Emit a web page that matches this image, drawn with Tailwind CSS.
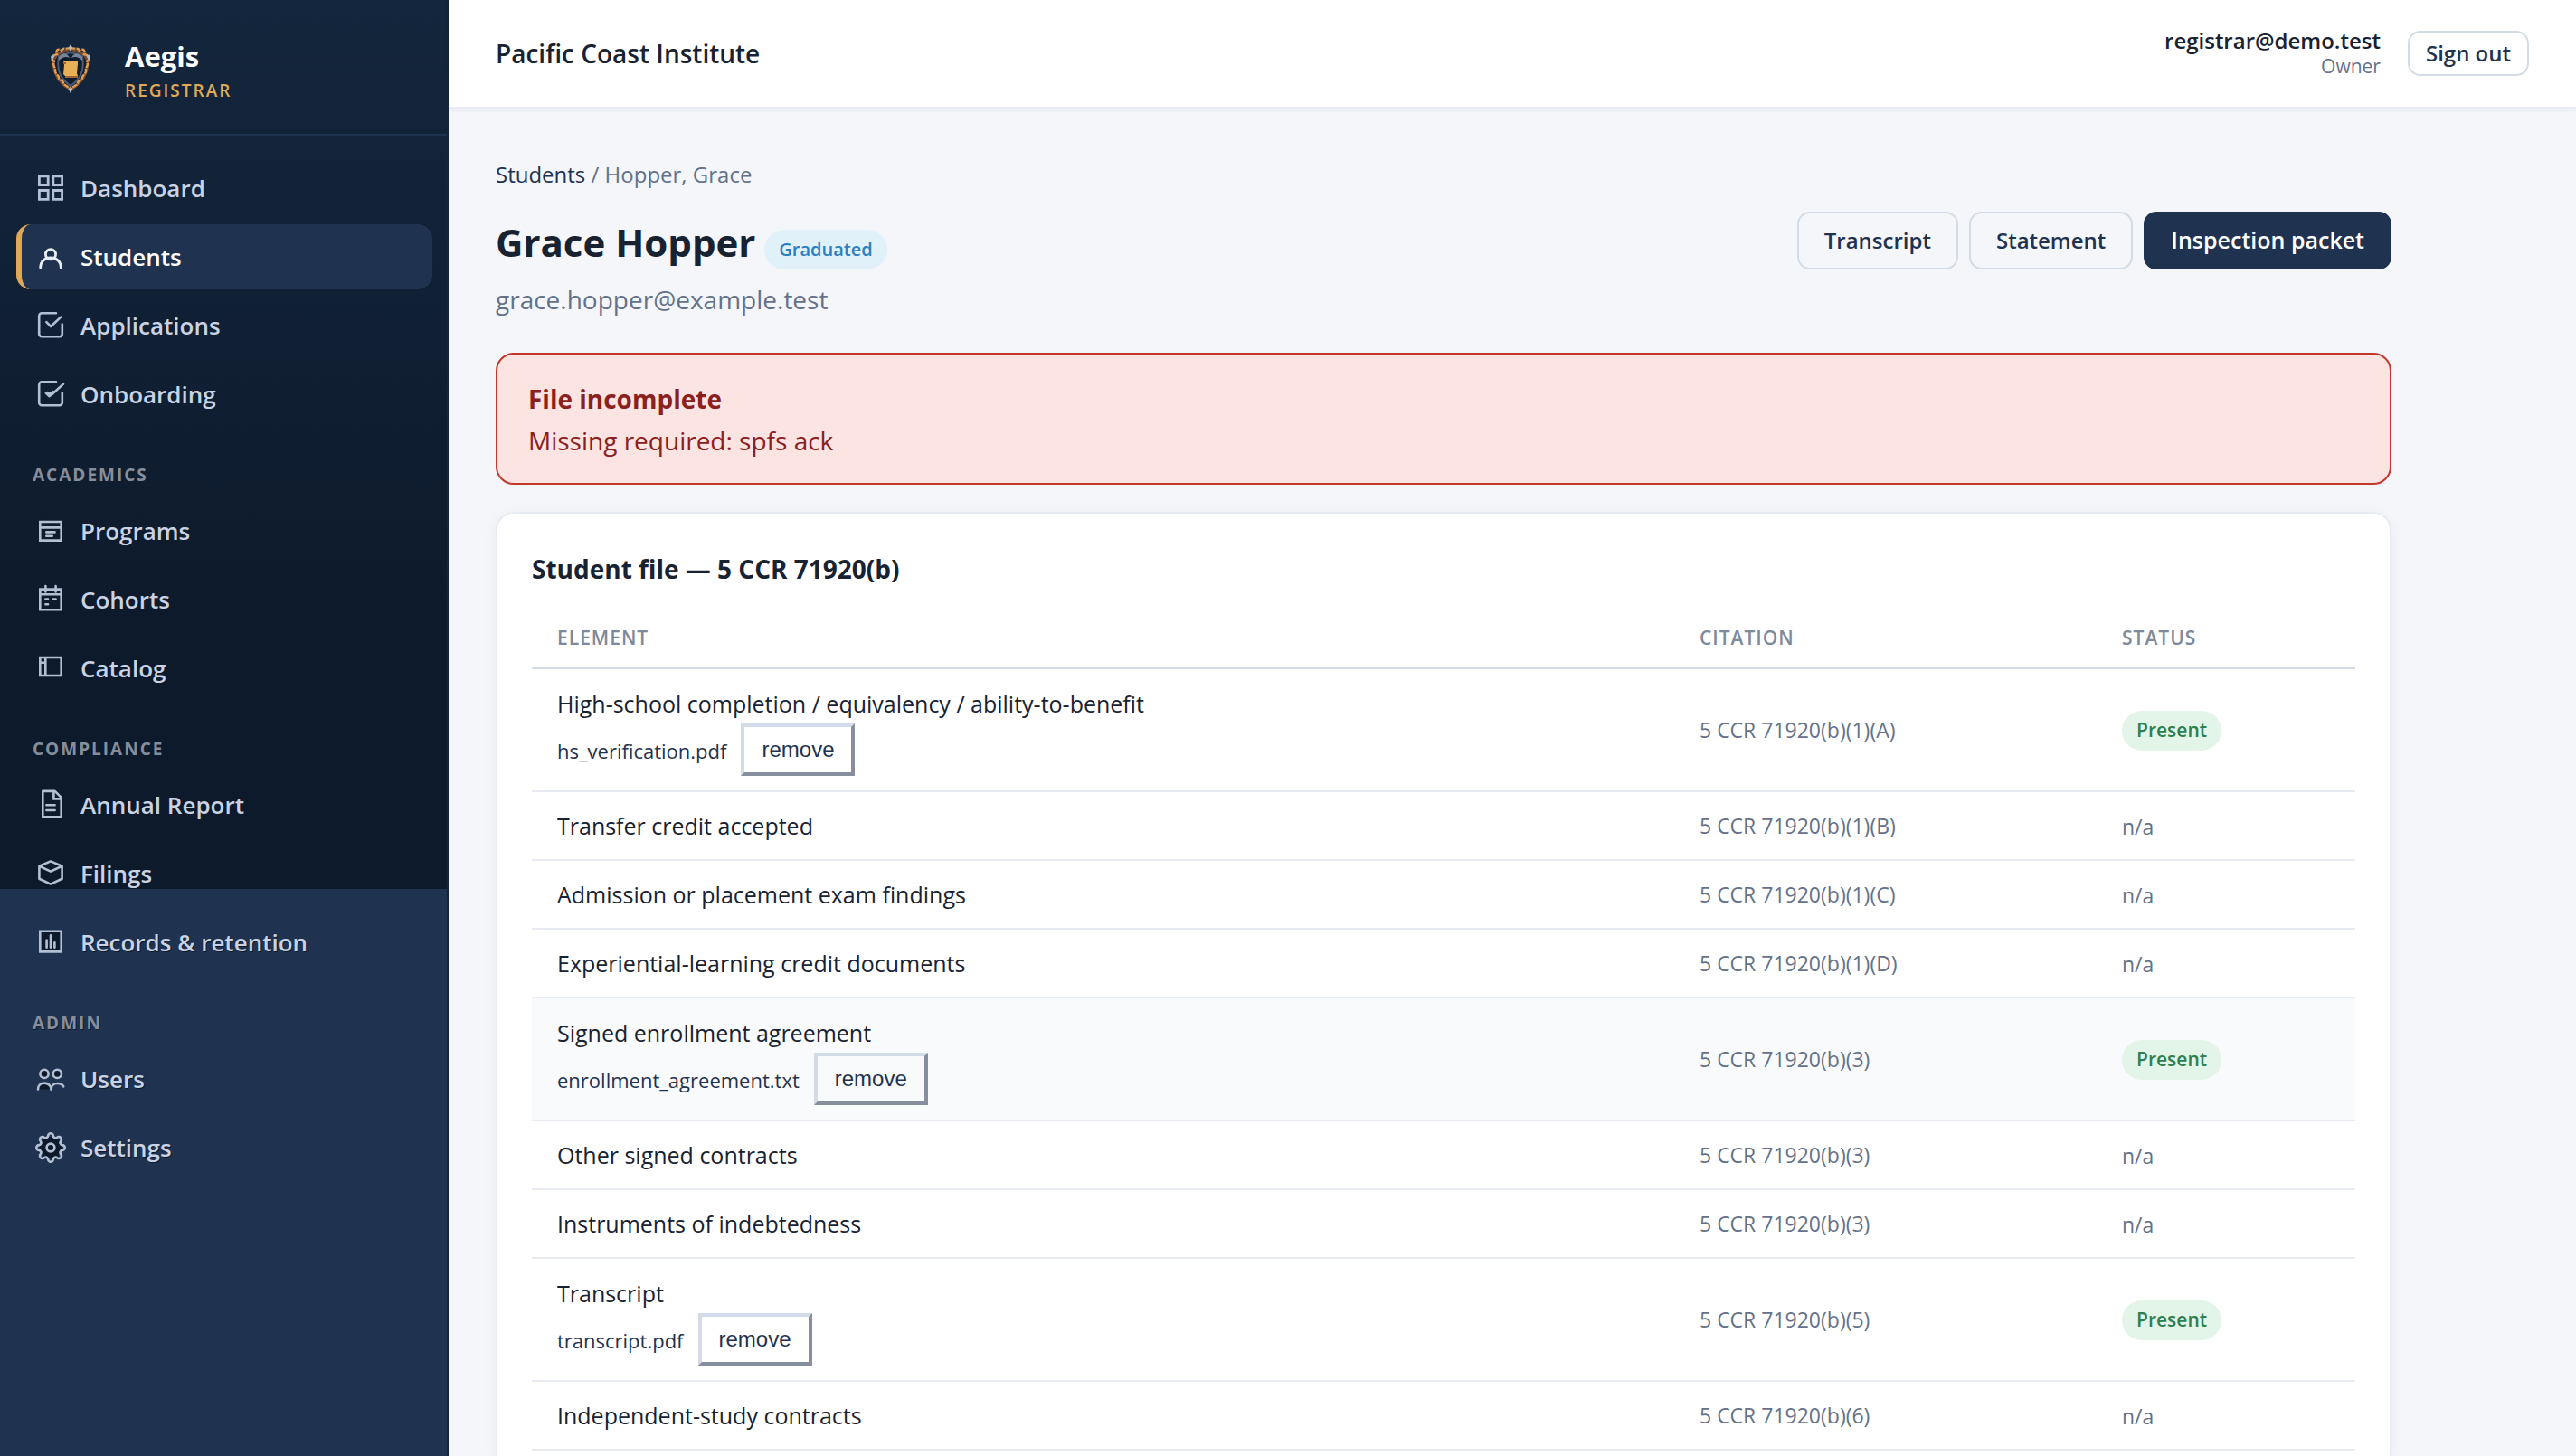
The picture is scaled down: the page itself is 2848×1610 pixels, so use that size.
<!DOCTYPE html>
<html lang="en">
    <head>
        <meta charset="UTF-8">
        <meta name="viewport" content="width=device-width, initial-scale=1.0">
        <title>Grace Hopper - Aegis Registrar</title>
        <script src="https://cdn.jsdelivr.net/npm/@tailwindcss/browser@4"></script>
    </head>
    <body class="bg-[#f4f6fa] font-['Open_Sans','Noto_Sans',sans-serif] text-[#182230]">
        <div class="flex h-screen overflow-hidden">
            <!-- Sidebar -->
            <aside class="w-[496px] shrink-0 border-r-2 border-[#13243b] bg-[#1f3350] bg-[linear-gradient(#14263d,#0d1a2b_70%)] bg-[length:100%_983px] bg-no-repeat">
                <div class="flex h-[150px] items-center gap-9 border-b-2 border-[#1f3350] pt-1 pl-[54px]">
                    <svg class="h-[54px] w-12" viewBox="0 0 48 54" fill="none">
                        <path d="M24 5l15 6 4 7c0 15-6 24-19 32C11 42 5 33 5 18l4-7z" fill="#0f1d30" stroke="#7d4a2e" stroke-width="3" />
                        <path d="M24 9l13 4c3 17-3 26-13 33C14 39 8 30 11 13z" stroke="#4b5a70" stroke-width="2" />
                        <path d="M24 3c-3 4-8-1-10 4-4-3-7 0-5 4-6 1-7 6-3 8-3 5 2 6 1 10-1 4 4 4 4 8 0 3 5 2 5 6 1 3 5 2 8 8 3-6 7-5 8-8 0-4 5-3 5-6 0-4 5-4 4-8-1-4 4-5 1-10 4-2 3-7-3-8 2-4-1-7-5-4-2-5-7 0-10-4z" stroke="#e09d50" stroke-width="2.4" stroke-dasharray="6 1" />
                        <path d="M11 14c4-5 9-5 12 1-4-2-8-1-12 3zM37 14c-4-5-9-5-12 1 4-2 8-1 12 3z" fill="#76849a" />
                        <path d="M16 18h16v4l-1 10 1 3H18l-2-2 1-10z" fill="#e8ae58" />
                        <path d="M18 36h14M16 21h3" stroke="#a5642f" stroke-width="2" />
                        <path d="M24 0l2 4-2 4-2-4zM24 46l2 4-2 4-2-4zM4 11l2 3-2 3-2-3zM44 11l2 3-2 3-2-3z" fill="#a9bdd4" />
                    </svg>
                    <div class="pt-[10px]">
                        <p class="text-[31px] leading-[38px] font-bold text-white">Aegis</p>
                        <p class="text-[19px] leading-[38px] font-semibold tracking-[2px] text-[#e0a955]">REGISTRAR</p>
                    </div>
                </div>
                <nav class="flex flex-col gap-1 pt-[22px] pr-4 pl-[18px] text-[26px] font-semibold text-[#c9d3e3]">
                    <a href="#" class="flex h-[72px] items-center gap-4 rounded-2xl border-l-[6px] border-transparent pl-[15px]">
                        <svg class="h-[34px] w-[34px]" viewBox="0 0 34 34" fill="none" stroke="#b3bfd3" stroke-width="2.8">
                            <path d="M4.4 3.9h9.8v9.8H4.4zM19.8 3.9h9.8v9.8h-9.8zM4.4 19.5h9.8v9.8H4.4zM19.8 19.5h9.8v9.8h-9.8z" />
                        </svg>
                        Dashboard
                    </a>
                    <a href="#" class="flex h-[72px] items-center gap-4 rounded-2xl border-l-[6px] border-[#e0a955] bg-[#1f3350] pl-[15px] text-white">
                        <svg class="h-[34px] w-[34px]" viewBox="0 0 34 34" fill="none" stroke="#e8ecf3" stroke-width="2.8" stroke-linecap="round">
                            <circle cx="17" cy="14.2" r="5.6" />
                            <path d="M5.7 29c0-7 5-11 11.3-11s11.3 4 11.3 11" />
                        </svg>
                        Students
                    </a>
                    <a href="#" class="flex h-[72px] items-center gap-4 rounded-2xl border-l-[6px] border-transparent pl-[15px]">
                        <svg class="h-[34px] w-[34px]" viewBox="0 0 34 34" fill="none" stroke="#b3bfd3" stroke-width="2.6" stroke-linecap="round" stroke-linejoin="round">
                            <path d="M23 3.2H7.2a3 3 0 0 0-3 3v20a3 3 0 0 0 3 3h19.6a3 3 0 0 0 3-3V15.5M12.4 13.2l4.8 4.8L28.2 7.6" />
                        </svg>
                        Applications
                    </a>
                    <a href="#" class="flex h-[72px] items-center gap-4 rounded-2xl border-l-[6px] border-transparent pl-[15px]">
                        <svg class="h-[34px] w-[34px]" viewBox="0 0 34 34" fill="none" stroke="#b3bfd3" stroke-width="2.6" stroke-linecap="round" stroke-linejoin="round">
                            <path d="M23 3.2H7.2a3 3 0 0 0-3 3v20a3 3 0 0 0 3 3h19.6a3 3 0 0 0 3-3V15.5" />
                            <path d="M11.8 15.6l3.8 3.6 4.4-5M13.5 15l4 3L31 5.6M16 15.5v3" />
                        </svg>
                        Onboarding
                    </a>
                    <h3 class="h-[71px] pt-[39px] pl-[18px] text-[19px] leading-5 font-bold tracking-[2px] text-[#868e9b]">ACADEMICS</h3>
                    <a href="#" class="flex h-[72px] items-center gap-4 rounded-2xl border-l-[6px] border-transparent pl-[15px]">
                        <svg class="h-[34px] w-[34px]" viewBox="0 0 34 34" fill="none" stroke="#b3bfd3" stroke-width="2.6">
                            <path d="M5.3 7h23.4v20.6H5.3zM5.3 13.4h23.4" />
                            <path d="M12.3 18.4h9.2M12.3 22.8h6.4" stroke-linecap="round" />
                        </svg>
                        Programs
                    </a>
                    <a href="#" class="flex h-[72px] items-center gap-4 rounded-2xl border-l-[6px] border-transparent pl-[15px]">
                        <svg class="h-[34px] w-[34px]" viewBox="0 0 34 34" fill="none" stroke="#b3bfd3" stroke-width="2.6">
                            <path d="M5.3 5.6h23.4v22.6H5.3zM5.3 11.2h23.4" />
                            <path d="M11.4 2v6.4M22.6 2v6.4M11.4 16.6h2.6M19.8 16.6h2.8M11.4 22.2h2.6" stroke-linecap="round" />
                        </svg>
                        Cohorts
                    </a>
                    <a href="#" class="flex h-[72px] items-center gap-4 rounded-2xl border-l-[6px] border-transparent pl-[15px]">
                        <svg class="h-[34px] w-[34px]" viewBox="0 0 34 34" fill="none" stroke="#b3bfd3" stroke-width="2.6">
                            <path d="M5.3 5h23.4v20H5.3zM11.3 5v20M5.3 10.8h6" />
                        </svg>
                        Catalog
                    </a>
                    <h3 class="h-[71px] pt-[39px] pl-[18px] text-[19px] leading-5 font-bold tracking-[2px] text-[#868e9b]">COMPLIANCE</h3>
                    <a href="#" class="flex h-[72px] items-center gap-4 rounded-2xl border-l-[6px] border-transparent pl-[15px]">
                        <svg class="h-[34px] w-[34px]" viewBox="0 0 34 34" fill="none" stroke="#b3bfd3" stroke-width="2.6">
                            <path d="M8.3 1.9h13.4l7 7v21.3H8.3z" stroke-linejoin="round" />
                            <path d="M20.4 2.4v8h8M12.4 17.2h9.2M12.4 23h9.2" stroke-linecap="round" />
                        </svg>
                        Annual Report
                    </a>
                    <a href="#" class="flex h-[72px] items-center gap-4 rounded-2xl border-l-[6px] border-transparent pl-[15px]">
                        <svg class="h-[34px] w-[34px]" viewBox="0 0 34 34" fill="none" stroke="#b3bfd3" stroke-width="2.6" stroke-linejoin="round">
                            <path d="M17 3.4l12.6 5.4v14L17 28.6 4.4 22.8v-14zM4.4 8.8L17 14.6l12.6-5.8" />
                        </svg>
                        Filings
                    </a>
                    <a href="#" class="flex h-[72px] items-center gap-4 rounded-2xl border-l-[6px] border-transparent pl-[15px] [text-shadow:1px_1px_0_#0d1a2b]">
                        <svg class="h-[34px] w-[34px]" viewBox="0 0 34 34" fill="none" stroke="#b3bfd3" stroke-width="2.6">
                            <path d="M5.3 4.8h23.4v22.6H5.3z" fill="#0d1a2b" />
                            <path d="M12.6 14.6v8.2M17 9.4v13.4M21.4 17.4v5.4" stroke-linecap="round" />
                        </svg>
                        Records &amp; retention
                    </a>
                    <h3 class="h-[71px] pt-[39px] pl-[18px] text-[19px] leading-5 font-bold tracking-[2px] text-[#868e9b] [text-shadow:1px_1px_0_#0d1a2b]">ADMIN</h3>
                    <a href="#" class="flex h-[72px] items-center gap-4 rounded-2xl border-l-[6px] border-transparent pl-[15px] [text-shadow:1px_1px_0_#0d1a2b]">
                        <svg class="h-[34px] w-[34px]" viewBox="0 0 34 34" fill="#0d1a2b" stroke="#b3bfd3" stroke-width="2.6" stroke-linecap="round">
                            <circle cx="10" cy="11.4" r="4.6" />
                            <circle cx="24.3" cy="11.4" r="4.6" />
                            <path d="M3 28.4c0-4 3-6.8 7-6.8s7.4 2.8 7.6 6.8" />
                            <path d="M17.6 28.4c0-4 3-6.4 7-6.4 3 0 5.4 1.2 6.6 3.4" fill="none" />
                        </svg>
                        Users
                    </a>
                    <a href="#" class="flex h-[72px] items-center gap-4 rounded-2xl border-l-[6px] border-transparent pl-[15px] [text-shadow:1px_1px_0_#0d1a2b]">
                        <svg class="h-[34px] w-[34px]" viewBox="-17 -17 34 34" fill="none" stroke="#b3bfd3" stroke-width="2.6" stroke-linecap="round">
                            <circle r="12" fill="#0d1a2b" stroke="none" />
                            <circle r="4.4" />
                            <g id="tooth"><path d="M-4.5-10.9Q-3-11.2-2.9-12.8A2.9 2.9 0 0 1 2.9-12.8Q3-11.2 4.5-10.9" /></g>
                            <use href="#tooth" transform="rotate(45)" />
                            <use href="#tooth" transform="rotate(90)" />
                            <use href="#tooth" transform="rotate(135)" />
                            <use href="#tooth" transform="rotate(180)" />
                            <use href="#tooth" transform="rotate(225)" />
                            <use href="#tooth" transform="rotate(270)" />
                            <use href="#tooth" transform="rotate(315)" />
                        </svg>
                        Settings
                    </a>
                </nav>
            </aside>

            <div class="flex min-w-0 flex-1 flex-col">
                <!-- Top bar -->
                <header class="flex h-[120px] shrink-0 items-center justify-between border-b-2 border-[#e8ecf2] bg-white px-[52px] shadow-[0_2px_4px_rgba(20,38,61,0.06)]">
                    <p class="text-[28px] font-semibold">Pacific Coast Institute</p>
                    <div class="flex items-center gap-[30px]">
                        <div class="text-right">
                            <p class="text-[24px] leading-7 font-semibold">registrar@demo.test</p>
                            <p class="text-[21px] leading-7 text-[#64718a]">Owner</p>
                        </div>
                        <button type="button" class="h-[50px] rounded-[14px] border-2 border-[#d3dce6] px-[18px] text-[24px] font-semibold text-[#1f3350]">Sign out</button>
                    </div>
                </header>

                <main class="flex max-w-[2200px] flex-1 flex-col px-[52px] pt-[55px]">
                    <nav class="text-[24px] leading-9 text-[#64718a]">
                        <a href="#" class="text-[#1f3350]">Students</a> / Hopper, Grace
                    </nav>
                    <div class="mt-[23px] flex items-start justify-between">
                        <div>
                            <div class="flex items-center gap-[10px]">
                                <h1 class="pb-1 text-[42px] leading-[68px] font-bold">Grace Hopper</h1>
                                <span class="mt-3 flex h-11 items-center rounded-full bg-[#e1f1fa] px-4 text-[20px] font-semibold text-[#2b80c2]">Graduated</span>
                            </div>
                            <p class="text-[28px] leading-[50px] text-[#64718a]">grace.hopper@example.test</p>
                        </div>
                        <div class="flex gap-3 font-semibold text-[#1f3350]">
                            <button type="button" class="h-16 rounded-[14px] border-2 border-[#d3dce6] px-7 text-[24px]">Transcript</button>
                            <button type="button" class="h-16 rounded-[14px] border-2 border-[#d3dce6] px-7 text-[24px]">Statement</button>
                            <button type="button" class="h-16 rounded-[14px] border-2 border-[#1f3350] bg-[#1f3350] px-7 text-[25px] text-white">Inspection packet</button>
                        </div>
                    </div>

                    <div class="mt-[34px] rounded-[20px] border-2 border-[#c0392b] bg-[#fbe4e2] px-[34px] pt-[26px] pb-6 text-[28px] leading-[46px] text-[#8b2020]">
                        <p class="font-bold">File incomplete</p>
                        <p>Missing required: spfs ack</p>
                    </div>

                    <section class="mt-[30px] flex-1 rounded-t-[20px] border-2 border-b-0 border-[#e8ecf2] bg-white px-[38px] pt-[41px] shadow-[0_4px_16px_rgba(20,38,61,0.05)]">
                        <h2 class="text-[28px] leading-10 font-bold">Student file — 5 CCR 71920(b)</h2>
                        <table class="mt-[22px] w-full text-left">
                            <thead>
                                <tr class="h-[68px] border-b-2 border-[#d3dce6] text-[21px] tracking-[1px] text-[#7d8a9b]">
                                    <th class="pt-0.5 pl-7 font-semibold">ELEMENT</th>
                                    <th class="w-[467px] pt-0.5 font-semibold">CITATION</th>
                                    <th class="w-[258px] pt-0.5 font-semibold">STATUS</th>
                                </tr>
                            </thead>
                            <tbody class="text-[23px] text-[#64718a]">
                                <tr class="h-[136px] border-b-2 border-[#e8ecf2]">
                                    <td class="pt-1 pl-7">
                                        <p class="text-[25px] leading-9 text-[#182230]">High-school completion / equivalency / ability-to-benefit</p>
                                        <div class="mt-1 flex items-center gap-4">
                                            <span class="pt-0.5 text-[22px] text-[#1f3350]">hs_verification.pdf</span>
                                            <button type="button" class="h-[58px] border-4 border-t-[#d3dce6] border-r-[#878f9e] border-b-[#878f9e] border-l-[#d3dce6] px-[19px] font-['Liberation_Sans',sans-serif] text-[24px] text-[#1f3350]">remove</button>
                                        </div>
                                    </td>
                                    <td>5 CCR 71920(b)(1)(A)</td>
                                    <td class="pt-0.5"><span class="inline-flex h-11 items-center rounded-full bg-[#e3f4e9] px-4 text-[21px] font-semibold text-[#2f8050]">Present</span></td>
                                </tr>
                                <tr class="h-[76px] border-b-2 border-[#e8ecf2]">
                                    <td class="pt-0.5 pl-7 text-[25px] text-[#182230]">Transfer credit accepted</td>
                                    <td>5 CCR 71920(b)(1)(B)</td>
                                    <td class="pt-0.5">n/a</td>
                                </tr>
                                <tr class="h-[76px] border-b-2 border-[#e8ecf2]">
                                    <td class="pt-0.5 pl-7 text-[25px] text-[#182230]">Admission or placement exam findings</td>
                                    <td>5 CCR 71920(b)(1)(C)</td>
                                    <td class="pt-0.5">n/a</td>
                                </tr>
                                <tr class="h-[76px] border-b-2 border-[#e8ecf2]">
                                    <td class="pt-0.5 pl-7 text-[25px] text-[#182230]">Experiential-learning credit documents</td>
                                    <td>5 CCR 71920(b)(1)(D)</td>
                                    <td class="pt-0.5">n/a</td>
                                </tr>
                                <tr class="h-[136px] border-b-2 border-[#e8ecf2] bg-[#f9fafc]">
                                    <td class="pt-1 pl-7">
                                        <p class="text-[25px] leading-9 text-[#182230]">Signed enrollment agreement</p>
                                        <div class="mt-1 flex items-center gap-4">
                                            <span class="pt-0.5 text-[22px] text-[#1f3350]">enrollment_agreement.txt</span>
                                            <button type="button" class="h-[58px] border-4 border-t-[#d3dce6] border-r-[#878f9e] border-b-[#878f9e] border-l-[#d3dce6] px-[19px] font-['Liberation_Sans',sans-serif] text-[24px] text-[#1f3350]">remove</button>
                                        </div>
                                    </td>
                                    <td>5 CCR 71920(b)(3)</td>
                                    <td class="pt-0.5"><span class="inline-flex h-11 items-center rounded-full bg-[#e3f4e9] px-4 text-[21px] font-semibold text-[#2f8050]">Present</span></td>
                                </tr>
                                <tr class="h-[76px] border-b-2 border-[#e8ecf2]">
                                    <td class="pt-0.5 pl-7 text-[25px] text-[#182230]">Other signed contracts</td>
                                    <td>5 CCR 71920(b)(3)</td>
                                    <td class="pt-0.5">n/a</td>
                                </tr>
                                <tr class="h-[76px] border-b-2 border-[#e8ecf2]">
                                    <td class="pt-0.5 pl-7 text-[25px] text-[#182230]">Instruments of indebtedness</td>
                                    <td>5 CCR 71920(b)(3)</td>
                                    <td class="pt-0.5">n/a</td>
                                </tr>
                                <tr class="h-[136px] border-b-2 border-[#e8ecf2]">
                                    <td class="pt-1 pl-7">
                                        <p class="text-[25px] leading-9 text-[#182230]">Transcript</p>
                                        <div class="mt-1 flex items-center gap-4">
                                            <span class="pt-0.5 text-[22px] text-[#1f3350]">transcript.pdf</span>
                                            <button type="button" class="h-[58px] border-4 border-t-[#d3dce6] border-r-[#878f9e] border-b-[#878f9e] border-l-[#d3dce6] px-[19px] font-['Liberation_Sans',sans-serif] text-[24px] text-[#1f3350]">remove</button>
                                        </div>
                                    </td>
                                    <td>5 CCR 71920(b)(5)</td>
                                    <td class="pt-0.5"><span class="inline-flex h-11 items-center rounded-full bg-[#e3f4e9] px-4 text-[21px] font-semibold text-[#2f8050]">Present</span></td>
                                </tr>
                                <tr class="h-[76px] border-b-2 border-[#e8ecf2]">
                                    <td class="pt-0.5 pl-7 text-[25px] text-[#182230]">Independent-study contracts</td>
                                    <td>5 CCR 71920(b)(6)</td>
                                    <td class="pt-0.5">n/a</td>
                                </tr>
                            </tbody>
                        </table>
                    </section>
                </main>
            </div>
        </div>
    </body>
</html>
